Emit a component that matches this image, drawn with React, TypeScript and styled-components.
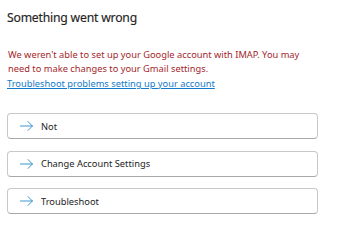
import { createGlobalStyle, styled } from 'styled-components';

const GlobalStyle = createGlobalStyle`
  body {
    margin: 0;
    background: #ffffff;
    font-family: 'Noto Sans', 'Open Sans', sans-serif;
  }
`;

const Arrow = () => (
  <svg width="13" height="10" viewBox="0 0 13 10" fill="none">
    <path d="M0.5 5h12M8 0.6L12.4 5 8 9.4" stroke="#3d96cc" strokeWidth="1" strokeLinecap="round" strokeLinejoin="round" />
  </svg>
);

const actions = ['Not', 'Change Account Settings', 'Troubleshoot'];

const App = () => (
  <>
    <GlobalStyle />
    <Panel>
      <Title>Something went wrong</Title>
      <ErrorText>
        We weren't able to set up your Google account with IMAP. You may need to make changes to your Gmail settings.
      </ErrorText>
      <HelpLink href="#">Troubleshoot problems setting up your account</HelpLink>
      <Actions>
        {actions.map((label) => (
          <ActionButton key={label}>
            <Arrow />
            <span>{label}</span>
          </ActionButton>
        ))}
      </Actions>
    </Panel>
  </>
);

export default App;

const Panel = styled.div`
  width: 311px;
  padding: 8px 0 0 7px;
  display: flex;
  flex-direction: column;
  align-items: flex-start;
`;

const Title = styled.h1`
  margin: 0;
  font-size: 12.2px;
  font-weight: 400;
  letter-spacing: -0.2px;
  color: #242424;
  line-height: 20px;
  -webkit-text-stroke: 0.15px #242424;
`;

const ErrorText = styled.p`
  margin: 20px 0 0 1px;
  width: 300px;
  font-size: 9.3px;
  line-height: 14px;
  color: #a4262c;
`;

const HelpLink = styled.a`
  margin-top: 1px;
  font-size: 9.3px;
  line-height: 14px;
  color: #1479c8;
  text-decoration: underline;
`;

const Actions = styled.div`
  align-self: stretch;
  margin-top: 22px;
  display: flex;
  flex-direction: column;
  gap: 11.5px;
`;

const ActionButton = styled.button`
  box-sizing: border-box;
  height: 26px;
  display: flex;
  align-items: center;
  gap: 8px;
  padding: 0 0 0 12px;
  background: #ffffff;
  border: 1px solid #c8c8c8;
  border-bottom-color: #a8a8a8;
  border-radius: 4px;
  font-family: 'Noto Sans', 'Open Sans', sans-serif;
  font-size: 9.3px;
  color: #242424;
  text-align: left;
  cursor: pointer;
`;
